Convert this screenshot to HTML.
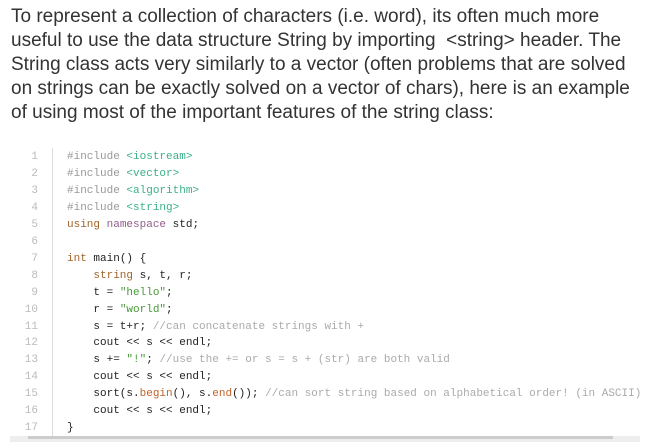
<!DOCTYPE html>
<html><head><style>
body{margin:0;width:645px;height:442px;background:#fff;overflow:hidden;position:relative}
.p{position:absolute;left:11px;top:5px;font-family:"Liberation Sans",sans-serif;font-size:19px;line-height:24px;color:#333;white-space:nowrap}
.code{position:absolute;left:0;top:149px;font-family:"Liberation Mono",monospace;font-size:11px;line-height:16.95px;white-space:pre;color:#222}
.ln{position:absolute;left:0;width:38px;text-align:right;color:#bbb}
.gut{position:absolute;left:52px;top:148px;width:1px;height:290px;background:#ddd}
.c{position:absolute;left:67px}
.pp{color:#999}.h{color:#3cb08a}.k{color:#a0642a}.n{color:#905d8c}.s{color:#4a9a3a}.cm{color:#aaa}.f{color:#c0622a}
.sb{position:absolute;left:10px;top:436px;width:630px;height:6px;background:#eee}
.sb div{position:absolute;left:18px;top:0;width:585px;height:3px;background:#ccc}
</style></head><body>
<div class="p">To represent a collection of characters (i.e. word), its often much more<br>useful to use the data structure String by importing &nbsp;&lt;string&gt; header. The<br>String class acts very similarly to a vector (often problems that are solved<br>on strings can be exactly solved on a vector of chars), here is an example<br>of using most of the important features of the string class:</div>
<div class="gut"></div>
<div class="code"><div class="ln">1
2
3
4
5
6
7
8
9
10
11
12
13
14
15
16
17</div><div class="c"><span class="pp">#include</span> <span class="h">&lt;iostream&gt;</span>
<span class="pp">#include</span> <span class="h">&lt;vector&gt;</span>
<span class="pp">#include</span> <span class="h">&lt;algorithm&gt;</span>
<span class="pp">#include</span> <span class="h">&lt;string&gt;</span>
<span class="k">using</span> <span class="n">namespace</span> std;

<span class="k">int</span> main() {
    <span class="k">string</span> s, t, r;
    t = <span class="s">"hello"</span>;
    r = <span class="s">"world"</span>;
    s = t+r; <span class="cm">//can concatenate strings with +</span>
    cout &lt;&lt; s &lt;&lt; endl;
    s += <span class="s">"!"</span>; <span class="cm">//use the += or s = s + (str) are both valid</span>
    cout &lt;&lt; s &lt;&lt; endl;
    sort(s.<span class="f">begin</span>(), s.<span class="f">end</span>()); <span class="cm">//can sort string based on alphabetical order! (in ASCII)</span>
    cout &lt;&lt; s &lt;&lt; endl;
}</div></div>
<div class="sb"><div></div></div>
</body></html>
